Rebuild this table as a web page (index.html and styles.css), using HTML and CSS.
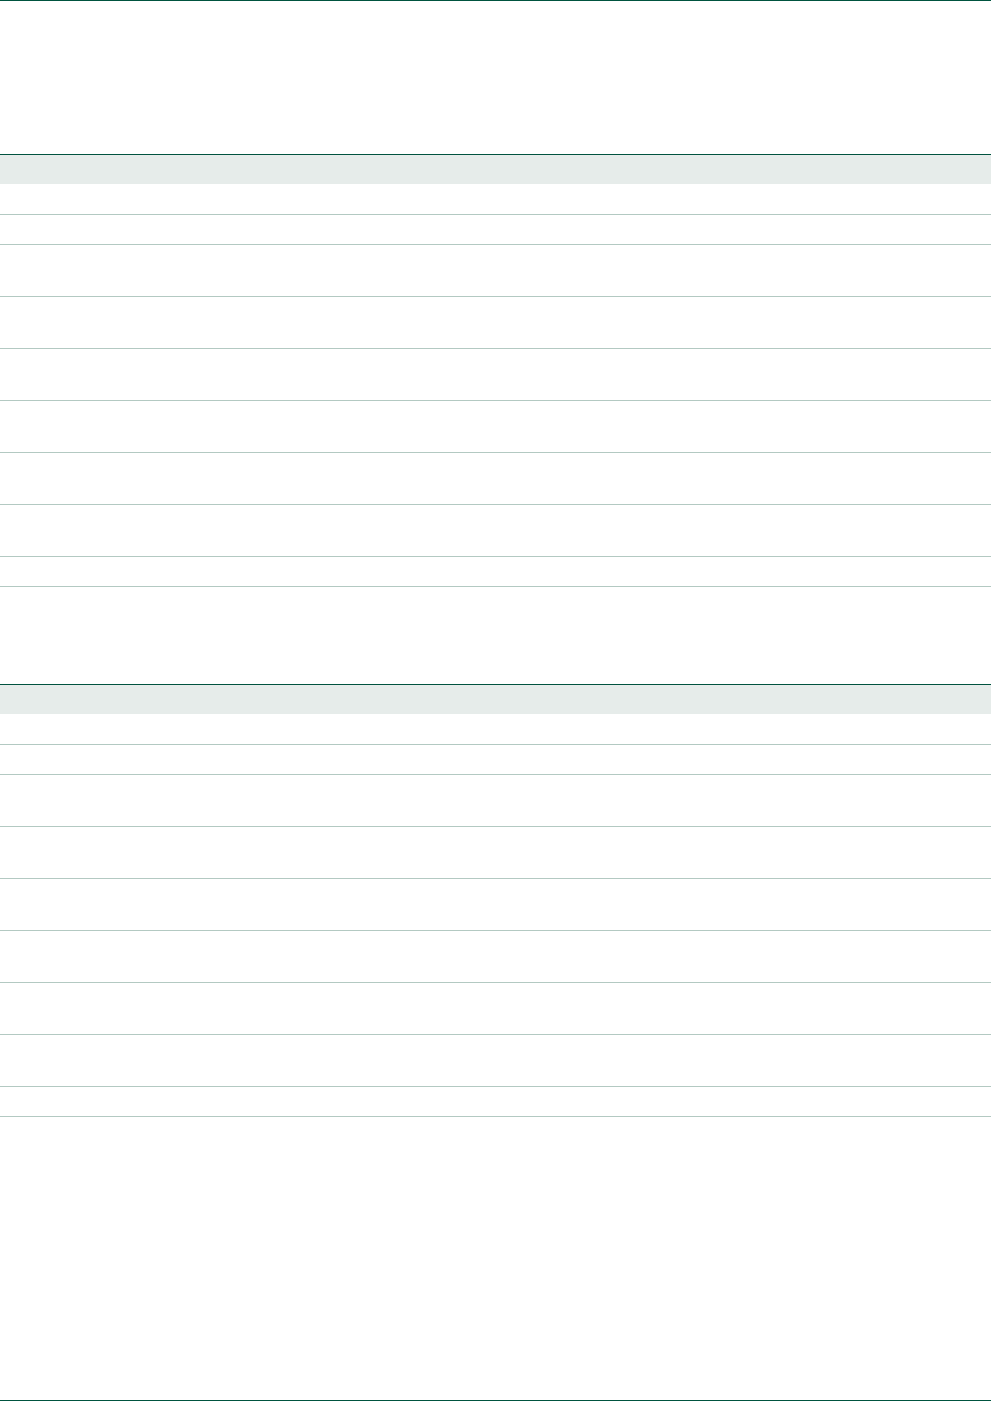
FILE: index.html
```html
<!DOCTYPE html>
<html lang="en">

<head>
    <meta charset="UTF-8">
    <meta name="viewport" content="width=device-width, initial-scale=1.0">
    <title>Tables</title>
    <link rel="stylesheet" href="styles.css">
</head>

<body>
    <header class="page-header"></header>

    <table class="data-table">
        <thead>
            <tr><th></th><th></th><th></th><th></th></tr>
        </thead>
        <tbody>
            <tr class="row-short"><td></td><td></td><td></td><td></td></tr>
            <tr class="row-thin"><td></td><td></td><td></td><td></td></tr>
            <tr class="row-tall"><td></td><td></td><td></td><td></td></tr>
            <tr class="row-tall"><td></td><td></td><td></td><td></td></tr>
            <tr class="row-tall"><td></td><td></td><td></td><td></td></tr>
            <tr class="row-tall"><td></td><td></td><td></td><td></td></tr>
            <tr class="row-tall"><td></td><td></td><td></td><td></td></tr>
            <tr class="row-tall"><td></td><td></td><td></td><td></td></tr>
            <tr class="row-thin"><td></td><td></td><td></td><td></td></tr>
        </tbody>
    </table>

    <table class="data-table second">
        <thead>
            <tr><th></th><th></th><th></th><th></th></tr>
        </thead>
        <tbody>
            <tr class="row-short"><td></td><td></td><td></td><td></td></tr>
            <tr class="row-thin"><td></td><td></td><td></td><td></td></tr>
            <tr class="row-tall"><td></td><td></td><td></td><td></td></tr>
            <tr class="row-tall"><td></td><td></td><td></td><td></td></tr>
            <tr class="row-tall"><td></td><td></td><td></td><td></td></tr>
            <tr class="row-tall"><td></td><td></td><td></td><td></td></tr>
            <tr class="row-tall"><td></td><td></td><td></td><td></td></tr>
            <tr class="row-tall"><td></td><td></td><td></td><td></td></tr>
            <tr class="row-thin"><td></td><td></td><td></td><td></td></tr>
        </tbody>
    </table>

    <footer class="page-footer"></footer>
</body>

</html>
```

FILE: styles.css
```css
* {
    box-sizing: border-box;
}
body {
    margin: 0;
    font-family: "Liberation Sans", Arial, sans-serif;
    background-color: #fff;
}
.page-header {
    height: 154px;
    border-top: 1px solid #00533f;
}
.data-table {
    width: 100%;
    border-collapse: separate;
    border-spacing: 0;
    border-top: 1px solid #00533f;
}
.data-table.second {
    margin-top: 97px;
}
.data-table th {
    height: 29px;
    padding: 0;
    background-color: #e6ecea;
}
.data-table td {
    padding: 0;
    border-bottom: 1px solid #b3c9c2;
}
.row-short td {
    height: 31px;
}
.row-thin td {
    height: 30px;
}
.row-tall td {
    height: 52px;
}
.page-footer {
    height: 284px;
    border-bottom: 1px solid #00533f;
}
```
